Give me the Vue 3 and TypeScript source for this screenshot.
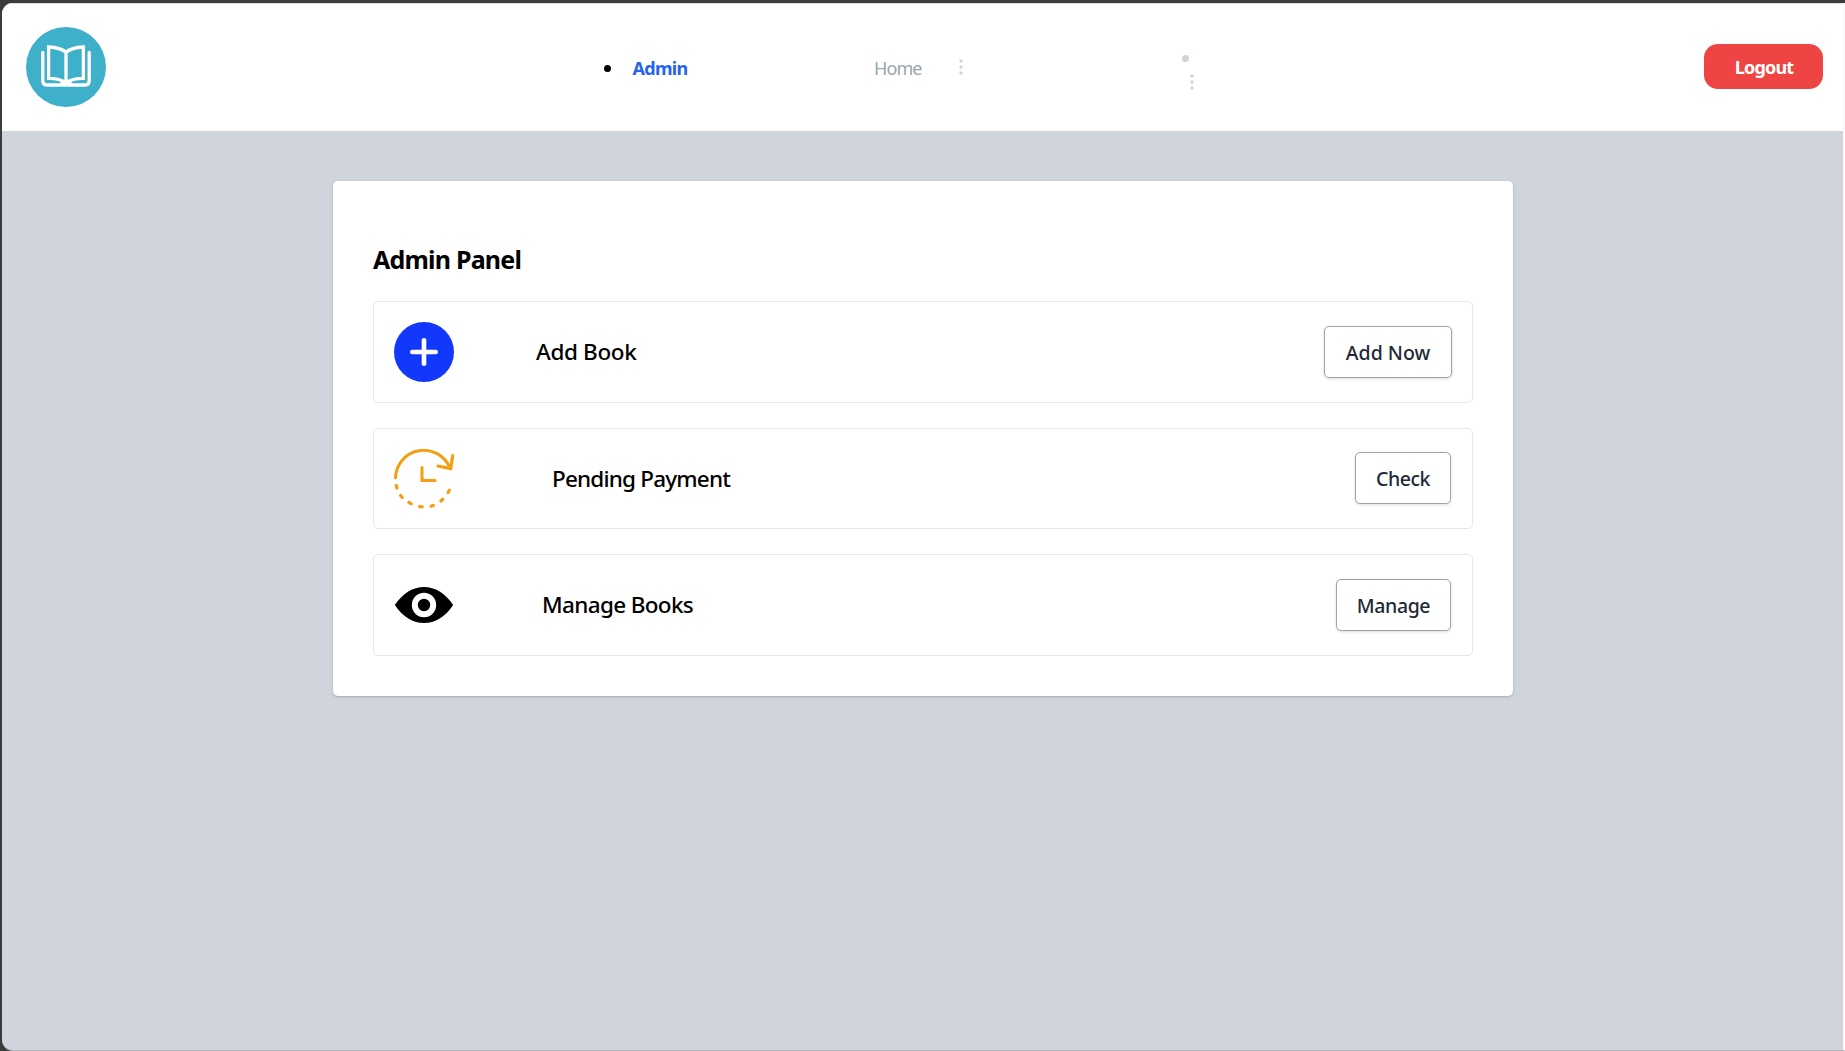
<script setup lang="ts">
interface Task {
  id: string
  title: string
  action: string
}

const tasks: Task[] = [
  { id: 'add', title: 'Add Book', action: 'Add Now' },
  { id: 'pending', title: 'Pending Payment', action: 'Check' },
  { id: 'manage', title: 'Manage Books', action: 'Manage' },
]
</script>

<template>
  <div class="window">
    <div class="page">
      <nav class="navbar">
        <svg class="logo" viewBox="0 0 80 80" aria-label="Library">
          <circle cx="40" cy="40" r="40" fill="#3eb0c9" />
          <g fill="none" stroke="#fff" stroke-width="3.3">
            <path d="M16.800 25.500v28.500q0 4 4 4h38.400q4 0 4-4V25.500" stroke-linecap="round" />
            <path d="M40 25.200q-5.500-4.700-17.400-5.200v31.300q11.500 0 17.400 4.700q5.900-4.700 17.400-4.700V20q-11.900.5-17.400 5.200zV56" />
          </g>
          <path d="M33 57q2-2.800 7-3q5 .2 7 3z" fill="#fff" />
        </svg>
        <ul class="links">
          <li class="item current"><i class="bullet"></i><a class="link">Admin</a></li>
          <li class="item home"><a class="link">Home</a></li>
          <li class="item">
            <svg class="dots" viewBox="0 0 4 16"><circle cx="2" cy="2" r="1.700" /><circle cx="2" cy="8" r="1.700" /><circle cx="2" cy="14" r="1.700" /></svg>
          </li>
          <li class="item stacked">
            <i class="bullet"></i>
            <svg class="dots" viewBox="0 0 4 16"><circle cx="2" cy="2" r="1.700" /><circle cx="2" cy="8" r="1.700" /><circle cx="2" cy="14" r="1.700" /></svg>
          </li>
        </ul>
        <button class="logout">Logout</button>
      </nav>

      <main class="card">
        <h1 class="heading">Admin Panel</h1>
        <section v-for="task in tasks" :key="task.id" class="row" :class="task.id">
          <svg v-if="task.id === 'add'" class="icon" viewBox="0 0 60 60">
            <circle cx="30" cy="30" r="30" fill="#1239fb" />
            <path d="M30 18.300v23.400M18.300 30h23.400" stroke="#fff" stroke-width="4.600" stroke-linecap="round" />
          </svg>
          <svg v-else-if="task.id === 'pending'" class="icon" viewBox="0 0 60 60" fill="none" stroke="#f29f12" stroke-width="3" stroke-linecap="round">
            <path d="M1.500 28.800A28.300 28.300 0 0 1 55.800 18.500" />
            <path d="M44 17l12.700 2.500L58.800 6.500" stroke-width="3.200" />
            <path d="M28 18.500v13h13" />
            <path d="M2.200 36.500l.8 2.500M6.600 46.400l1.600 2M14.900 53.500l2.300 1.200M25.600 57.600l2.600.3M37 57.200l2.300-.7M46.900 52l1.900-1.700M54.100 43.500l1.300-2.300" stroke-width="3.200" />
          </svg>
          <svg v-else class="icon" viewBox="0 0 60 60">
            <path d="M.8 30C9 18 19 12 30 12s21 6 29.200 18C51 42 41 48 30 48S9 42 .8 30z" fill="#000" />
            <circle cx="30" cy="30" r="9.200" fill="#000" stroke="#fff" stroke-width="6" />
          </svg>
          <h2 class="title">{{ task.title }}</h2>
          <button class="action">{{ task.action }}</button>
        </section>
      </main>
    </div>
  </div>
</template>

<style>
body {
  margin: 0;
  overflow: hidden;
  background: #3b3b3b;
}
</style>

<style scoped>
.window {
  box-sizing: border-box;
  height: 1051px;
  padding: 3px 0 0 2px;
  font-family: "Segoe UI", "Noto Sans", "Open Sans", sans-serif;
}
.page {
  box-sizing: border-box;
  height: 1048px;
  overflow: hidden;
  border-right: 2px solid #fafafa;
  border-bottom: 1px solid #b1b3b8;
  border-radius: 11px 0 0 11px;
  background: #d0d4dc;
}
.navbar {
  box-sizing: border-box;
  display: flex;
  align-items: center;
  height: 128px;
  padding: 0 20px 2px 24px;
  border-top: 1px solid #dedede;
  background: #fff;
}
.logo {
  width: 80px;
  height: 80px;
}
.links {
  display: flex;
  flex: 1;
  align-items: center;
  margin: 0;
  padding: 0 0 0 498px;
  list-style: none;
  font-size: 18px;
  line-height: 28px;
}
.item {
  display: flex;
  align-items: center;
}
.bullet {
  flex: none;
  width: 7px;
  height: 7px;
  border-radius: 50%;
  background: currentColor;
}
.current {
  width: 270px;
  padding-top: 3px;
  color: #000;
}
.current .link {
  margin-left: 21.5px;
  color: #2563eb;
  font-weight: 700;
  letter-spacing: -0.7px;
}
.home {
  width: 85px;
  padding-top: 3px;
  color: #9ca3af;
}
.home .link {
  letter-spacing: -0.9px;
}
.dots {
  width: 4px;
  height: 16px;
  fill: #d1d5db;
}
.stacked {
  flex-direction: column;
  align-items: flex-start;
  gap: 12px;
  margin-left: 219px;
  padding-top: 11px;
  color: #d1d5db;
}
.stacked .dots {
  margin-left: 8px;
}
.logout {
  width: 119px;
  height: 45px;
  padding: 1px 0 0 1px;
  border: 0;
  border-radius: 14px;
  background: #ef4444;
  color: #fff;
  font: 700 18px/28px "Segoe UI", "Noto Sans", sans-serif;
  letter-spacing: -0.8px;
}
.card {
  box-sizing: border-box;
  width: 1180px;
  height: 515px;
  margin: 50px auto 0 331px;
  padding: 60px 40px 0;
  border-radius: 5px;
  background: #fff;
  box-shadow: 0 1px 3px rgba(0, 0, 0, 0.14), 0 1px 2px rgba(0, 0, 0, 0.06);
}
.heading {
  height: 36px;
  margin: 0 0 24px;
  font-size: 25px;
  font-weight: 700;
  line-height: 36px;
  letter-spacing: -0.8px;
}
.row {
  box-sizing: border-box;
  display: flex;
  align-items: center;
  height: 102px;
  margin-bottom: 25px;
  padding: 0 21px 0 20px;
  border: 1px solid #e5e7eb;
  border-radius: 5px;
}
.row.add {
  padding-right: 20px;
}
.row.pending {
  height: 101px;
}
.icon {
  flex: none;
  width: 60px;
  height: 60px;
}
.title {
  margin: 0 auto 0 82px;
  font-size: 22.500px;
  font-weight: 500;
  line-height: 32px;
  letter-spacing: -0.35px;
}
.pending .title {
  margin-left: 98px;
  letter-spacing: -0.8px;
}
.manage .title {
  margin-left: 88px;
  letter-spacing: -0.65px;
}
.action {
  box-sizing: border-box;
  width: 128px;
  height: 52px;
  padding: 2px 0 0;
  border: 1px solid #9ca3af;
  border-radius: 5px;
  background: #fff;
  box-shadow: 0 1px 3px rgba(0, 0, 0, 0.14);
  color: #1f2937;
  font: 500 19.500px/28px "Segoe UI", "Noto Sans", sans-serif;
  letter-spacing: 0;
}
.pending .action {
  width: 96px;
  margin-bottom: 1px;
  letter-spacing: -0.5px;
}
.manage .action {
  width: 115px;
  letter-spacing: -0.4px;
}
</style>
